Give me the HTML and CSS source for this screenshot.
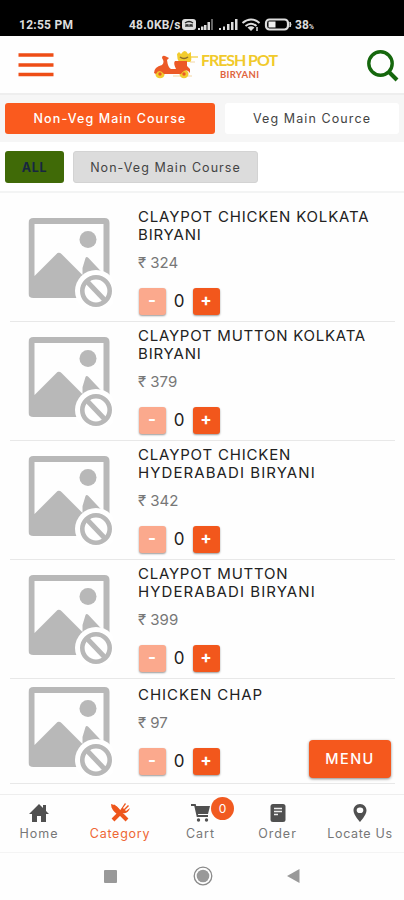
FILE: index.html
```
<!DOCTYPE html>
<html lang="en">
<head>
<meta charset="utf-8">
<title>Fresh Pot Biryani</title>
<link rel="stylesheet" href="styles.css">
</head>
<body>
<svg class="defs" width="0" height="0">
  <symbol id="noimg" viewBox="0 0 84 90">
    <path fill="#b8b8b8" fill-rule="evenodd" d="M5 0H76Q81 0 81 5V76Q81 80 76 80H5Q0 80 0 76V5Q0 0 5 0ZM6 6V58L29 35Q31 34 33 36L54 57V50L57 40Q58 38 60 40L75 56V6Z"/>
    <circle cx="59.500" cy="21.500" r="8.500" fill="#b8b8b8"/>
    <circle cx="67.500" cy="73" r="21" fill="#fff"/>
    <circle cx="67.500" cy="73" r="13.700" fill="#fff" stroke="#b8b8b8" stroke-width="4.600"/>
    <path d="M58 63L77 83" stroke="#b8b8b8" stroke-width="5"/>
  </symbol>
</svg>
<header class="status">
  <span class="clock">12:55 PM</span>
  <div class="status-right">
    <span class="speed">48.0KB/s</span>
    <svg class="status-icons" width="112" height="16" viewBox="0 0 112 16">
      <rect x="0" y="2" width="14" height="11" rx="3" fill="#ddd"/>
      <path d="M3 6Q7 3 11 6M4 10V8H6V10M8 10V8H10V10" fill="none" stroke="#222" stroke-width="1.300"/>
      <g fill="#ddd"><path d="M16 11H18V13H16ZM19 9.500H21.500V13H19ZM22 8H24.500V13H22ZM25.500 5H28V13H25.500Z"/><path fill="#666" d="M29 2H31V13H29Z"/><path d="M37 11H39V13H37ZM41 9.500H43V13H41ZM45 7H47.500V13H45ZM49 5H51.500V13H49ZM53 2H55.500V13H53Z"/></g>
      <g fill="none" stroke="#ddd" stroke-width="2"><path d="M60.500 6Q69 -1 77.500 6M63.500 9Q69 4.500 74.500 9"/></g>
      <path d="M65.500 10.500Q69 8 72.500 10.500L69 14Z" fill="#ddd"/><path d="M75 10V14" stroke="#ddd" stroke-width="1.500"/>
      <rect x="84" y="2.500" width="22" height="10" rx="3.500" fill="none" stroke="#ddd" stroke-width="2.200"/><rect x="86.500" y="4.500" width="7" height="6" fill="#eee"/><path d="M108 5Q110 7.500 108 10Z" fill="#ddd" stroke="#ddd"/>
    </svg>
    <span class="battery">38<small>%</small></span>
  </div>
</header>
<div class="topbar">
  <svg class="burger" width="36" height="26" viewBox="0 0 36 26"><path d="M.5 3H35.500M.5 13H35.500M.5 22.500H35.500" stroke="#ee4d16" stroke-width="3.600"/></svg>
  <svg class="logo" width="130" height="40" viewBox="0 0 130 40">
    <path d="M20 30H39M37 16H42" stroke="#f8e3c2" stroke-width="1.500"/>
    <g fill="#f2cc2e"><ellipse cx="7" cy="28.500" rx="4.500" ry="3.800"/><ellipse cx="31" cy="28" rx="4.500" ry="4.200"/><path d="M24 8L26 6L28 8Q32 2 35 8L38 6V10Q39 15 37 16H26Q24 13 24 8Z"/><path d="M35 10H45V12H36Z" opacity=".6"/></g>
    <g fill="#ec5926"><path d="M9 12Q9 9 12 10L16 12L14 14Q15 22 18 23H23Q20 17 22 15H34V20L37 23V27Q33 21 28 28H11Q6 22 3 28L1 27Q1 21 9 19Q12 16 9 12Z"/><circle cx="7" cy="28" r="1.700"/><circle cx="31" cy="28" r="1.700"/></g>
    <path d="M27 11Q31 14 35 11" stroke="#8c6c2c" fill="none" stroke-width="1.500"/>
    <text class="brand" x="48" y="19.500" textLength="77">FRESH POT</text>
    <text class="brand-sub" x="67" y="32" textLength="39">BIRYANI</text>
  </svg>
  <svg class="search" width="32" height="32" viewBox="0 0 32 32"><circle cx="13.500" cy="13.500" r="11.700" fill="none" stroke="#15670d" stroke-width="3.400"/><path d="M21.500 21.500L30 30" stroke="#15670d" stroke-width="4"/></svg>
</div>
<nav class="tabs">
  <div class="tab tab-on">Non-Veg Main Course</div>
  <div class="tab tab-off">Veg Main Cource</div>
</nav>
<nav class="filters">
  <div class="chip chip-all">ALL</div>
  <div class="chip chip-grey">Non-Veg Main Course</div>
</nav>
<main class="list">
  <article class="item"><svg class="photo"><use href="#noimg"/></svg><div class="info"><h2>CLAYPOT CHICKEN KOLKATA<br>BIRYANI</h2><p class="price">₹ 324</p><div class="stepper"><b class="btn minus">-</b><span class="qty">0</span><b class="btn">+</b></div></div></article>
  <article class="item"><svg class="photo"><use href="#noimg"/></svg><div class="info"><h2><span class="tight">CLAYPOT MUTTON KOLKATA</span><br>BIRYANI</h2><p class="price">₹ 379</p><div class="stepper"><b class="btn minus">-</b><span class="qty">0</span><b class="btn">+</b></div></div></article>
  <article class="item"><svg class="photo"><use href="#noimg"/></svg><div class="info"><h2>CLAYPOT CHICKEN<br><span class="wide">HYDERABADI BIRYANI</span></h2><p class="price">₹ 342</p><div class="stepper"><b class="btn minus">-</b><span class="qty">0</span><b class="btn">+</b></div></div></article>
  <article class="item"><svg class="photo"><use href="#noimg"/></svg><div class="info"><h2><span class="tight">CLAYPOT MUTTON</span><br><span class="wide">HYDERABADI BIRYANI</span></h2><p class="price">₹ 399</p><div class="stepper"><b class="btn minus">-</b><span class="qty">0</span><b class="btn">+</b></div></div></article>
  <article class="item short"><svg class="photo"><use href="#noimg"/></svg><div class="info"><h2 class="wide">CHICKEN CHAP</h2><p class="price">₹ 97</p><div class="stepper"><b class="btn minus">-</b><span class="qty">0</span><b class="btn">+</b></div></div></article>
</main>
<div class="menu">MENU</div>
<nav class="bottom">
  <div class="link"><svg width="20" height="20" viewBox="0 0 20 20"><path fill="#505050" d="M10 1L14 5V2H17V8L20 11H17V19H12V13H8V19H3V11H0Z"/></svg><span>Home</span></div>
  <div class="link active"><svg width="20" height="20" viewBox="0 0 20 20"><path fill="none" stroke="#ee561c" stroke-width="4" d="M3 3L17 17M3 17L13 7"/><path fill="#ee561c" d="M1 1Q8 2 11 9L8 12Q1 7 1 1ZM11 6L15 0L16 1L13 5L14 6L18 2L19 3L15 7L16 8L20 5Q18 11 13 10Z"/></svg><span>Category</span></div>
  <div class="link cart"><svg width="20" height="20" viewBox="0 0 20 20"><path fill="#505050" d="M4 3H19L17 11H6Z"/><path d="M0 2H4L6.500 13H17" fill="none" stroke="#505050" stroke-width="1.800"/><circle cx="7.500" cy="17" r="1.700" fill="#505050"/><circle cx="15.500" cy="17" r="1.700" fill="#505050"/></svg><span>Cart</span><i class="badge">0</i></div>
  <div class="link"><svg width="20" height="20" viewBox="0 0 20 20"><rect x="2.500" y="1" width="15" height="18" rx="2.500" fill="#505050"/><path d="M6 5.500H14M6 8.500H14M6 11.500H10" stroke="#eee" stroke-width="1.500"/></svg><span>Order</span></div>
  <div class="link"><svg width="20" height="20" viewBox="0 0 20 20"><path fill="#505050" fill-rule="evenodd" d="M10 1C6 1 3.500 4 3.500 7.500C3.500 12 10 19 10 19S16.500 12 16.500 7.500C16.500 4 14 1 10 1ZM10 4.500A2.800 2.800 0 1 1 10 10A2.800 2.800 0 1 1 10 4.500Z"/></svg><span class="last">Locate Us</span></div>
</nav>
<footer class="system">
  <svg width="13" height="13"><rect width="13" height="13" rx="1" fill="#999"/></svg>
  <svg width="20" height="20" viewBox="0 0 20 20"><circle cx="10" cy="10" r="8.800" fill="none" stroke="#8a8a8a" stroke-width="1.300"/><circle cx="10" cy="10" r="6.300" fill="#999"/></svg>
  <svg width="13" height="14" viewBox="0 0 13 14"><path d="M0 7L12.500 0V14Z" fill="#999"/></svg>
</footer>
</body>
</html>
```
FILE: styles.css
```
* { box-sizing: border-box; }
body { margin: 0; width: 404px; height: 900px; overflow: hidden; background: #fefefe; font-family: Inter, "Noto Sans", sans-serif; position: relative; color: #222; }
svg { display: block; flex: none; }
.defs { position: absolute; }
.status { height: 36px; background: #000; color: #ddd; display: flex; justify-content: space-between; padding: 17px 88px 0 19px; font: 700 12px/16px Roboto, sans-serif; }
.clock { letter-spacing: .25px; }
.status-right { display: flex; }
.speed { letter-spacing: .2px; width: 53px; white-space: nowrap; }
.status-icons { margin-right: 1px; }
.battery { width: 21px; white-space: nowrap; }
.battery small { font-size: 7px; }
.topbar { height: 59px; display: flex; justify-content: space-between; padding: 10px 5px 0 18px; border-bottom: 2px solid #eee; }
.burger { margin-top: 6px; }
.logo { margin-left: 15px; }
.search { margin-top: 4px; }
.brand { font: 700 16px/16px Lato, sans-serif; fill: #f1ca2c; }
.brand-sub { font: 700 9.500px/10px Lato, sans-serif; fill: #df6440; }
.tabs { height: 47px; background: #f6f6f6; display: flex; gap: 10px; padding: 8px 5px; }
.tab { height: 31px; border-radius: 3px; display: flex; align-items: center; justify-content: center; font-size: 12.500px; }
.tab-on { width: 210px; background: #fa5a1e; color: #fff; font-weight: 500; letter-spacing: 1.100px; }
.tab-off { width: 174px; background: #fff; letter-spacing: 1.100px; color: #444; }
.filters { height: 51px; background: #fff; display: flex; gap: 9px; padding: 9px 5px; border-bottom: 2px solid #f3f4f4; }
.chip { height: 32px; border-radius: 3px; display: flex; align-items: center; justify-content: center; font-size: 12.500px; }
.chip-all { width: 59px; background: #406a07; color: #172640; font-weight: 700; letter-spacing: .7px; }
.chip-grey { width: 185px; background: #dcdcdc; color: #444; letter-spacing: 1.050px; border: 1px solid #d3d3d3; }
.list { padding: 10px 9px 0 10px; }
.item { height: 119px; display: flex; align-items: center; border-bottom: 1px solid #e8e8e8; padding-left: 18px; }
.photo { width: 84px; height: 90px; margin: 2px 26px 0 0; transform: translateX(.5px); }
.info { height: 119px; padding-top: 5px; }
h2 { margin: 0; font-size: 15px; line-height: 18px; font-weight: 400; letter-spacing: .82px; white-space: nowrap; }
.tight { letter-spacing: .75px; }
.wide { letter-spacing: 1.080px; }
.short .wide { letter-spacing: .95px; }
.price { margin: 10px 0 16px; font-size: 15px; line-height: 18px; color: #777; }
.stepper { display: flex; margin-left: .5px; }
.btn { width: 27px; height: 27px; background: #f2571c; border-radius: 3px; box-shadow: 0 1px 2px #0006; color: #fff; font-size: 17px; line-height: 25px; text-align: center; }
.minus { background: #fba98d; }
.qty { width: 27px; text-align: center; font-size: 17px; line-height: 27px; }
.short { height: 105px; }
.short .info { height: 105px; padding-top: 7px; }
.menu { position: absolute; left: 309px; top: 740px; width: 82px; height: 38px; border-radius: 4px; background: #f5581d; box-shadow: 0 1px 3px #0007; color: #fff; font-size: 14.500px; font-weight: 500; line-height: 37px; letter-spacing: 1.500px; text-align: center; }
.bottom { height: 59px; margin-top: 10px; border-top: 1px solid #eee; border-bottom: 1px solid #f4f4f4; display: flex; padding-top: 8px; }
.link { display: flex; flex-direction: column; align-items: center; gap: 3px; width: 78px; font-size: 12.500px; line-height: 16px; letter-spacing: 1px; color: #777; position: relative; white-space: nowrap; }
.link:nth-child(2) { width: 84px; }
.link:nth-child(3) { width: 77px; }
.link:nth-child(4) { width: 77px; }
.link:nth-child(5) { width: 88px; }
.last { letter-spacing: .65px; }
.active { color: #ee6734; letter-spacing: .75px; }
.badge { position: absolute; left: 49px; top: -6px; width: 23px; height: 23px; border-radius: 50%; background: #f15a20; color: #fff; font-size: 12px; font-style: normal; line-height: 23px; text-align: center; letter-spacing: 0; }
.system { height: 46px; display: flex; align-items: center; padding-left: 104px; }
.system svg:nth-child(2) { margin-left: 76px; }
.system svg:nth-child(3) { margin-left: 74px; }
```
